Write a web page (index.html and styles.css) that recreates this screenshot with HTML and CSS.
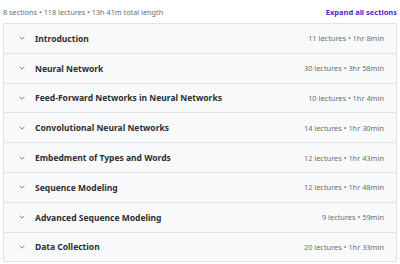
FILE: index.html
```html
<!DOCTYPE html>
<html lang="en">
  <head>
    <meta charset="UTF-8" />
    <meta name="viewport" content="width=device-width, initial-scale=1.0" />
    <title>Course content</title>
    <link rel="stylesheet" href="styles.css">
  </head>
  <body>
    <div class="content">
      <div class="summary">
        <span>8 sections • 118 lectures • 13h 41m total length</span>
        <button class="expand">Expand all sections</button>
      </div>
      <div class="sections">
        <div class="section">
          <svg class="chevron" viewBox="0 0 10 6"><path d="M1 1l4 4 4-4" /></svg>
          <span class="title">Introduction</span>
          <span class="meta">11 lectures • 1hr 8min</span>
        </div>
        <div class="section">
          <svg class="chevron" viewBox="0 0 10 6"><path d="M1 1l4 4 4-4" /></svg>
          <span class="title">Neural Network</span>
          <span class="meta">30 lectures • 3hr 58min</span>
        </div>
        <div class="section">
          <svg class="chevron" viewBox="0 0 10 6"><path d="M1 1l4 4 4-4" /></svg>
          <span class="title">Feed-Forward Networks in Neural Networks</span>
          <span class="meta">10 lectures • 1hr 4min</span>
        </div>
        <div class="section">
          <svg class="chevron" viewBox="0 0 10 6"><path d="M1 1l4 4 4-4" /></svg>
          <span class="title">Convolutional Neural Networks</span>
          <span class="meta">14 lectures • 1hr 30min</span>
        </div>
        <div class="section">
          <svg class="chevron" viewBox="0 0 10 6"><path d="M1 1l4 4 4-4" /></svg>
          <span class="title">Embedment of Types and Words</span>
          <span class="meta">12 lectures • 1hr 43min</span>
        </div>
        <div class="section">
          <svg class="chevron" viewBox="0 0 10 6"><path d="M1 1l4 4 4-4" /></svg>
          <span class="title">Sequence Modeling</span>
          <span class="meta">12 lectures • 1hr 48min</span>
        </div>
        <div class="section">
          <svg class="chevron" viewBox="0 0 10 6"><path d="M1 1l4 4 4-4" /></svg>
          <span class="title">Advanced Sequence Modeling</span>
          <span class="meta">9 lectures • 59min</span>
        </div>
        <div class="section">
          <svg class="chevron" viewBox="0 0 10 6"><path d="M1 1l4 4 4-4" /></svg>
          <span class="title">Data Collection</span>
          <span class="meta">20 lectures • 1hr 33min</span>
        </div>
      </div>
    </div>
  </body>
</html>
```
FILE: styles.css
```css
body {
  margin: 0;
  font-family: "Noto Sans", "Liberation Sans", sans-serif;
  background-color: #fff;
  color: #2d2f31;
}
.content {
  padding: 3px 3px 0 3px;
}
.summary {
  display: flex;
  justify-content: space-between;
  align-items: center;
  height: 18px;
  font-size: 7.3px;
  color: #6a6f73;
  margin-bottom: 2px;
}
.expand {
  border: none;
  background: none;
  padding: 0;
  font-family: inherit;
  font-size: 7.5px;
  font-weight: 700;
  color: #5624d0;
  cursor: pointer;
}
.sections {
  border: 1px solid #dfe3e6;
}
.section {
  display: flex;
  align-items: center;
  height: 28.8px;
  padding: 0 12px 0 15px;
  background-color: #f7f9fa;
  border-top: 1px solid #dfe3e6;
}
.section:first-child {
  border-top: none;
}
.chevron {
  width: 6px;
  height: 4px;
  fill: none;
  stroke: #3e4143;
  stroke-width: 1.1;
  margin-right: 10px;
}
.title {
  flex: 1;
  font-size: 8.5px;
  font-weight: 700;
}
.meta {
  font-size: 7.4px;
  color: #6a6f73;
}
```
